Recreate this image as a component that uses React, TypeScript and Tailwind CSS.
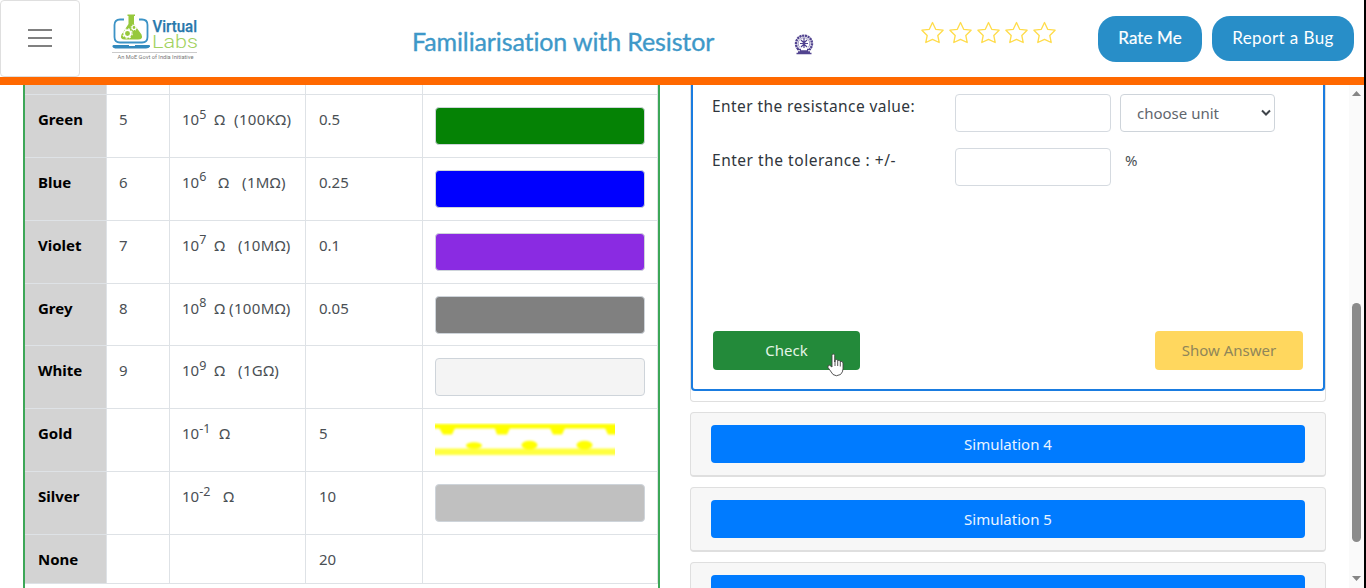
import React from "react";

type Row = {
  name: string;
  digit: string;
  exp: string;
  unit: string;
  unitClass: string;
  value: string;
  valueClass: string;
  tolerance: string;
  swatch: string;
};

const rows: Row[] = [
  { name: "Green", digit: "5", exp: "5", unit: "Ω", unitClass: "ml-[8px]", value: "(100KΩ)", valueClass: "ml-[9px]", tolerance: "0.5", swatch: "bg-[#058205]" },
  { name: "Blue", digit: "6", exp: "6", unit: "Ω", unitClass: "ml-[12px]", value: "(1MΩ)", valueClass: "ml-[13px]", tolerance: "0.25", swatch: "bg-[#0000ff]" },
  { name: "Violet", digit: "7", exp: "7", unit: "Ω", unitClass: "ml-[8px]", value: "(10MΩ)", valueClass: "ml-[13px]", tolerance: "0.1", swatch: "bg-[#8a2be2]" },
  { name: "Grey", digit: "8", exp: "8", unit: "Ω", unitClass: "ml-[8px]", value: "(100MΩ)", valueClass: "ml-[4px]", tolerance: "0.05", swatch: "bg-[#808080]" },
  { name: "White", digit: "9", exp: "9", unit: "Ω", unitClass: "ml-[8px]", value: "(1GΩ)", valueClass: "ml-[13px]", tolerance: "", swatch: "bg-[#f4f4f4]" },
  { name: "Gold", digit: "", exp: "-1", unit: "Ω", unitClass: "ml-[9px]", value: "", valueClass: "", tolerance: "5", swatch: "gold" },
  { name: "Silver", digit: "", exp: "-2", unit: "Ω", unitClass: "ml-[13px]", value: "", valueClass: "", tolerance: "10", swatch: "bg-[#c0c0c0]" },
];

const columns = "grid grid-cols-[82px_63px_136px_117px_235px]";

function GoldBand() {
  return (
    <svg width="181" height="34" viewBox="0 0 181 34" className="mt-[14px] ml-[12px] block">
      <defs>
        <filter id="soft" x="-5%" y="-20%" width="110%" height="140%">
          <feGaussianBlur stdDeviation="1" />
        </filter>
        <clipPath id="band"><rect width="180" height="34" /></clipPath>
      </defs>
      <g clipPath="url(#band)">
        <g fill="#ffff00" filter="url(#soft)">
          <rect x="-4" y="1" width="190" height="4.5" />
          <path d="M3 3H21L17 11.500H8ZM59 3H76L72 11.500H62ZM114 3H131L127 11.500H118ZM169 3H186V11.500H173Z" />
          <ellipse cx="39" cy="22.500" rx="8" ry="3.300" />
          <ellipse cx="94.500" cy="22" rx="8" ry="4.300" />
          <ellipse cx="149.500" cy="22" rx="8" ry="4.300" />
          <rect x="-4" y="25.500" width="190" height="6.500" opacity="0.75" />
        </g>
      </g>
    </svg>
  );
}

function TableRow({ row }: { row: Row }) {
  return (
    <div className={`${columns} h-[62.86px] shrink-0 text-[15px] leading-6 text-[#4a4f54]`}>
      <div className="border-t border-r border-[#dee2e6] bg-[#d3d3d3] px-[13px] pt-[12px] font-bold text-black">{row.name}</div>
      <div className="border-t border-r border-[#dee2e6] px-[12px] pt-[12px]">{row.digit}</div>
      <div className="flex border-t border-r border-[#dee2e6] pt-[12px] pl-[12px] whitespace-nowrap">
        <span>10</span>
        <span className="-mt-[4.5px] text-[12.5px]">{row.exp}</span>
        <span className={row.unitClass}>{row.unit}</span>
        <span className={`tracking-[0.35px] ${row.valueClass}`}>{row.value}</span>
      </div>
      <div className="border-t border-r border-[#dee2e6] px-[13px] pt-[12px]">{row.tolerance}</div>
      <div className="border-t border-r border-[#dee2e6]">
        {row.swatch === "gold" ? <GoldBand /> : (
          <div className={`mt-[12px] ml-[12px] h-[38px] w-[210px] rounded-[4px] border border-[#ced4da] ${row.swatch}`} />
        )}
      </div>
    </div>
  );
}

function Logo() {
  return (
    <svg width="90" height="50" viewBox="0 0 90 50" className="ml-[30px]">
      <path d="M12 6.500H8Q2.500 6.500 2.500 12V24Q2.500 29.500 8 29.500H30Q35.500 29.500 35.500 24V12Q35.500 6.500 30 6.500H27" fill="none" stroke="#3c93c6" strokeWidth="1.800" />
      <path d="M1.500 32H37Q38.500 32 38 33.500Q37 35.500 34 35.500H5Q1 35.500 .5 33.500Q.3 32 1.500 32Z" fill="#3289bd" />
      <path d="M17 32H23V33H17Z" fill="#fff" />
      <path d="M15.500 1.500H23V3H22V11L29.500 21.500Q31.500 26.500 26 26.500H13Q7.500 26.500 9.500 21.500L16.500 11V3H15.500Z" fill="#96c83c" />
      <circle cx="15.500" cy="20.500" r="3.300" fill="none" stroke="#fff" strokeWidth="1.700" />
      <circle cx="15.500" cy="20.500" r="4.700" fill="none" stroke="#fff" strokeWidth="1.200" strokeDasharray="1.850 1.850" />
      <circle cx="22" cy="14.500" r="2" fill="none" stroke="#fff" strokeWidth="1.200" />
      <circle cx="22" cy="14.500" r="2.900" fill="none" stroke="#fff" strokeWidth=".8" strokeDasharray="1.100 1.200" />
      <text x="40.500" y="18.500" fontFamily="Roboto, sans-serif" fontWeight="500" fontSize="16" fill="#2878ac" stroke="#2878ac" strokeWidth=".25" textLength="44.500" lengthAdjust="spacingAndGlyphs">Virtual</text>
      <text x="40" y="35" fontFamily="Roboto, sans-serif" fontWeight="300" fontSize="17.500" fill="#a2d260" textLength="46" lengthAdjust="spacingAndGlyphs">Labs</text>
      <path d="M0 39.500H85" stroke="#b5b5b5" strokeWidth=".7" />
      <text x="5.500" y="46.300" fontFamily="Roboto, sans-serif" fontSize="5.400" fill="#777" textLength="76" lengthAdjust="spacingAndGlyphs">An MoE Govt of India Initiative</text>
    </svg>
  );
}

function Emblem() {
  return (
    <svg width="20" height="22" viewBox="0 0 20 22" fill="none" stroke="#51438f">
      <path d="M4.300 16.200A8 8 0 1 1 15.700 16.200" strokeWidth="2.400" strokeDasharray="2.200 .6" />
      <path d="M5.800 14.500A5.800 5.800 0 1 1 14.200 14.500" strokeWidth="1" opacity=".55" />
      <path d="M10 5V15M7 7L10 10L13 7M6 10.500H14M7 14L10 11L13 14" strokeWidth="1.200" />
      <path d="M3 16.500H7M13 16.500H17M6 17.800H14M2.500 20.500H17.500M4 19H16" strokeWidth="1.300" />
    </svg>
  );
}

function Star() {
  return (
    <svg width="28" height="26" viewBox="0 0 28 26" fill="none" stroke="#ffdc4a" strokeWidth="1.300" strokeLinejoin="round">
      <path d="M14.500 2.500L17.700 9.300L25.100 10.200L19.800 15.500L21.200 22.500L14.500 19.300L7.800 22.500L9.200 15.500L3.900 10.200L11.300 9.300Z" />
    </svg>
  );
}

function Header() {
  return (
    <header className="flex h-[77px] w-[1364px] shrink-0 bg-white">
      <button className="flex h-[77px] w-[80px] shrink-0 flex-col items-center justify-center gap-[6px] rounded-[4px] border border-[#dfdfdf] pb-[2px]">
        <span className="h-[2px] w-6 bg-[#808080]" />
        <span className="h-[2px] w-6 bg-[#808080]" />
        <span className="h-[2px] w-6 bg-[#808080]" />
      </button>
      <div className="w-[332px] shrink-0 pt-[13px] pl-[2px]"><Logo /></div>
      <h1 className="w-[382px] shrink-0 pt-[25px] font-['Lato',sans-serif] text-[25px] leading-[32px] tracking-[-0.12px] whitespace-nowrap text-[#3e98c8] [-webkit-text-stroke:0.35px_#3e98c8]">Familiarisation with Resistor</h1>
      <div className="w-[124px] shrink-0 pt-[33px]"><Emblem /></div>
      <div className="flex w-[180px] shrink-0 pt-[20px]"><Star /><Star /><Star /><Star /><Star /></div>
      <button className="mt-[16px] h-[46px] w-[104px] shrink-0 rounded-[18px] bg-[#288ec8] pb-[2px] font-['Lato',sans-serif] text-[17px] tracking-[0.1px] text-white [-webkit-text-stroke:0.2px_white]">Rate Me</button>
      <button className="mt-[16px] ml-[10px] h-[45px] w-[142px] shrink-0 rounded-[18px] bg-[#288ec8] pb-[1px] font-['Lato',sans-serif] text-[17px] tracking-[0.4px] text-white">Report a Bug</button>
    </header>
  );
}

function SimulationCard({ label }: { label?: string }) {
  return (
    <div className="mt-[10px] flex h-[65px] shrink-0 items-center rounded-[4px] border border-b-2 border-[#dfdfdf] bg-[#f7f7f7] px-[20px]">
      <button className="h-[38px] w-full rounded-[4px] bg-[#007bff] text-[15px] text-[#e9f4ff]">{label}</button>
    </div>
  );
}

function HandCursor() {
  return (
    <svg width="18" height="25" viewBox="0 0 18 25" className="absolute top-[22px] left-[114px]">
      <path d="M5 2.500Q5 1 6.300 1T7.700 2.500V9L8.200 7Q10 5.800 10.500 7.500Q12.500 6.500 13 8.500Q15.500 7.500 16 10V16Q16 19 13.500 21.500Q9 24 6 21.500L1 14.500Q.5 12 2.500 12.200L5 14Z" fill="#fff" stroke="#444" strokeWidth=".9" />
      <path d="M8 8V13M10.700 8V13M13.300 9V13.500" stroke="#444" strokeWidth=".9" />
    </svg>
  );
}

export default function App() {
  return (
    <div className="flex h-[588px] w-[1366px] overflow-hidden bg-white font-['Noto_Sans',sans-serif]">
      <div className="flex w-[1364px] shrink-0 flex-col">
        <Header />
        <div className="h-[8px] shrink-0 bg-[#ff6800]" />
        <main className="flex h-[503px] overflow-hidden">
          <section className="ml-[23px] flex w-[637px] shrink-0 flex-col border-x-2 border-[#3da758]">
            <div className={`${columns} h-[9px] shrink-0`}>
              <div className="border-r border-[#dee2e6] bg-[#d3d3d3]" />
              <div className="border-r border-[#dee2e6]" />
              <div className="border-r border-[#dee2e6]" />
              <div className="border-r border-[#dee2e6]" />
              <div className="border-r border-[#dee2e6]" />
            </div>
            {rows.map((row) => <TableRow key={row.name} row={row} />)}
            <div className={`${columns} h-[50px] shrink-0 border-b border-[#dee2e6] text-[15px] leading-6`}>
              <div className="border-t border-r border-[#dee2e6] bg-[#d3d3d3] px-[13px] pt-[12px] font-bold">None</div>
              <div className="border-t border-r border-[#dee2e6]" />
              <div className="border-t border-r border-[#dee2e6]" />
              <div className="border-t border-r border-[#dee2e6] px-[13px] pt-[12px] text-[#4a4f54]">20</div>
              <div className="border-t border-r border-[#dee2e6]" />
            </div>
          </section>
          <section className="ml-[30px] flex w-[636px] shrink-0 flex-col">
            <div className="h-[317px] shrink-0 rounded-b-[4px] border-x border-b border-[#dfdfdf]">
              <div className="flex h-[306px] flex-col rounded-b-[4px] border-x-2 border-b-2 border-[#1a7ce0] pr-[20px] pl-[19px]">
                <div className="flex h-[54px] pt-[9px]">
                  <label className="w-[243px] shrink-0 text-[15.500px] leading-6 tracking-[0.420px] whitespace-nowrap text-[#30363c]">Enter the resistance value:</label>
                  <div className="h-[38px] w-[156px] rounded-[4px] border border-[#d5dae0]" />
                  <div className="ml-[9px] flex h-[38px] w-[155px] items-center justify-between rounded-[4px] border border-[#ced4da] pr-[3px] pl-[16px] text-[15px] text-[#5f666d]">
                    <span className="pt-[1px]">choose unit</span>
                    <svg width="10" height="8" viewBox="0 0 10 8"><path d="M1 1.500L5 5.500L9 1.500" fill="none" stroke="#3f444a" strokeWidth="2" /></svg>
                  </div>
                </div>
                <div className="flex h-[54px] pt-[9px]">
                  <label className="w-[243px] shrink-0 text-[15.500px] leading-6 tracking-[0.520px] whitespace-nowrap text-[#30363c]">Enter the tolerance : +/-</label>
                  <div className="h-[38px] w-[156px] rounded-[4px] border border-[#d5dae0]" />
                  <span className="ml-[14px] text-[15px] leading-6 text-[#4a4f54]">%</span>
                </div>
                <div className="mt-[138px] ml-px flex justify-between">
                  <div className="relative">
                    <button className="h-[39px] w-[147px] rounded-[4px] bg-[#238a3a] text-[15px] text-[#e4f5e7]">Check</button>
                    <HandCursor />
                  </div>
                  <button className="h-[39px] w-[148px] rounded-[4px] bg-[#ffd75e] text-[15px] text-[#908659]">Show Answer</button>
                </div>
              </div>
            </div>
            <SimulationCard label="Simulation 4" />
            <SimulationCard label="Simulation 5" />
            <SimulationCard />
          </section>
          <div className="ml-[23px] flex w-[15px] shrink-0 flex-col items-center bg-[#fafafa]">
            <svg width="9" height="5" viewBox="0 0 9 5" className="mt-[6px] shrink-0"><path d="M4.500 0L9 5H0Z" fill="#858585" /></svg>
            <div className="mt-[207px] h-[239px] w-[9px] shrink-0 rounded-full bg-[#8b8b8b]" />
            <svg width="9" height="5" viewBox="0 0 9 5" className="mt-[34px] shrink-0"><path d="M0 0H9L4.500 5Z" fill="#858585" /></svg>
          </div>
        </main>
      </div>
      <div className="w-[2px] bg-black" />
    </div>
  );
}
